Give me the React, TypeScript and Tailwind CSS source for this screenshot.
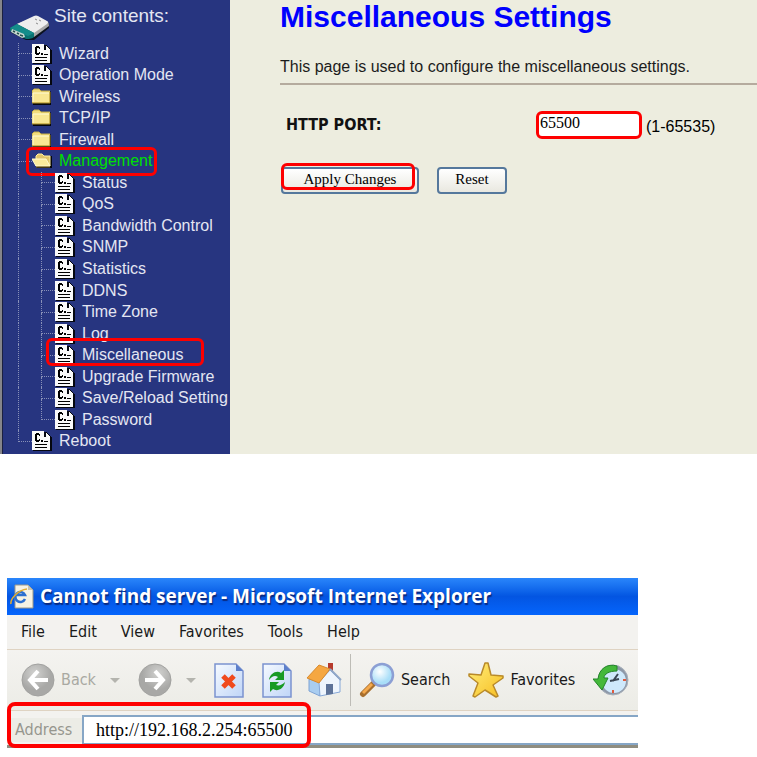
import clsx from "clsx";

interface TreeItem {
  label: string;
  icon: "page" | "folder" | "open";
  depth: 1 | 2;
  last?: boolean;
  active?: boolean;
  marked?: boolean;
}

const items: TreeItem[] = [
  { label: "Wizard", icon: "page", depth: 1 },
  { label: "Operation Mode", icon: "page", depth: 1 },
  { label: "Wireless", icon: "folder", depth: 1 },
  { label: "TCP/IP", icon: "folder", depth: 1 },
  { label: "Firewall", icon: "folder", depth: 1 },
  { label: "Management", icon: "open", depth: 1, active: true },
  { label: "Status", icon: "page", depth: 2 },
  { label: "QoS", icon: "page", depth: 2 },
  { label: "Bandwidth Control", icon: "page", depth: 2 },
  { label: "SNMP", icon: "page", depth: 2 },
  { label: "Statistics", icon: "page", depth: 2 },
  { label: "DDNS", icon: "page", depth: 2 },
  { label: "Time Zone", icon: "page", depth: 2 },
  { label: "Log", icon: "page", depth: 2 },
  { label: "Miscellaneous", icon: "page", depth: 2, marked: true },
  { label: "Upgrade Firmware", icon: "page", depth: 2 },
  { label: "Save/Reload Setting", icon: "page", depth: 2 },
  { label: "Password", icon: "page", depth: 2, last: true },
  { label: "Reboot", icon: "page", depth: 1, last: true },
];

const menus = ["File", "Edit", "View", "Favorites", "Tools", "Help"];

function PageIcon() {
  return (
    <svg width="20" height="20" viewBox="0 0 20 20" shapeRendering="crispEdges" className="shrink-0">
      <path d="M1 1h13l6 6v13H1z" fill="#05070f" />
      <path d="M0 0h12v6h6v13H0z" fill="#fafafa" />
      <path d="M14 2h1v1h1v1h1v1h1v1h-4z" fill="#fafafa" />
      <path d="M4 2h3v2H5v5h2v2H4v-1H3V3h1zM7 3h1v2H7zM7 8h1v2H7z" fill="#000" />
      <path d="M9 9h2v2H9zM12 10h4v1h-4z" fill="#000" />
      <path d="M3 13h12v1H3zM3 16h12v1H3z" fill="#000" />
    </svg>
  );
}

function FolderIcon() {
  return (
    <svg width="20" height="20" viewBox="0 0 20 20" className="shrink-0">
      <path d="M1 18h18V5l-1-1v12H1z" fill="#05070f" />
      <path d="M0 16V4l2-2h5l2 2h9v12z" fill="#f3dd7c" />
      <path d="M1 15V6h16v9z" fill="#f9e793" />
      <path d="M0 16V4l2-2h5l2 2h9" fill="none" stroke="#c8b048" />
      <path d="M1 6h16M1 6v9" fill="none" stroke="#fffbd8" />
      <path d="M0 16h18V5" fill="none" stroke="#a88c28" />
    </svg>
  );
}

function OpenFolderIcon() {
  return (
    <svg width="20" height="20" viewBox="0 0 20 20" className="shrink-0">
      <path d="M4 17h16V5h-2z" fill="#05070f" />
      <path d="M4 15V5l2-2h4l2 2h6v10z" fill="#e0c468" stroke="#fff0a0" />
      <path d="M0 8h14l4 7H4z" fill="#fbeb9c" stroke="#fffad0" />
      <path d="M4 16h14" stroke="#80641c" />
    </svg>
  );
}

function RouterIcon() {
  return (
    <svg width="41" height="26" viewBox="0 0 41 26" className="shrink-0">
      <path d="M1 17l16 8h8l15-12V8L26 20z" fill="#0b1220" />
      <path d="M27 1l12 6q1 1 1 4L25 22 8 9z" fill="#a6a6a6" />
      <path d="M25 1q2-1 4 0l9 5q2 1 0 3L25 18 8 9z" fill="#eeeeee" />
      <path d="M8 9l17 9v4q-2 2-8 2L1 16v-3z" fill="#0a7272" />
      <path d="M8 9l17 9-6 3L1 13z" fill="#148c8a" />
      <path d="M3 14l12 5 1 3-3 1-11-6z" fill="#c4d6d0" />
      <path d="M4 16l2 1M8 18l2 1M11 20l3 1" stroke="#24514e" strokeWidth="1.5" />
      <path d="M26 4l2 1M30 5l2 1M27 8l2 1" stroke="#8b8b8b" />
    </svg>
  );
}

function Branch({ last }: { last?: boolean }) {
  return (
    <span className="flex h-full w-[14px] shrink-0 flex-col">
      <span className="flex-1 border-b border-l border-dotted border-[#8890b8]" />
      <span className={clsx("flex-1", !last && "border-l border-dotted border-[#8890b8]")} />
    </span>
  );
}

function TreeRow({ item }: { item: TreeItem }) {
  return (
    <li className="relative flex items-center pl-[15px]">
      {item.depth === 2 && (
        <span className="h-full w-[23px] shrink-0 border-l border-dotted border-[#8890b8]" />
      )}
      <Branch last={item.last} />
      {item.icon === "page" && <PageIcon />}
      {item.icon === "folder" && <FolderIcon />}
      {item.icon === "open" && <OpenFolderIcon />}
      <a
        href="#"
        className={clsx(
          "ml-[7px] text-base leading-5 whitespace-nowrap",
          item.active ? "text-[#00e000]" : "text-[#e4e6f2]"
        )}
      >
        {item.label}
      </a>
      {item.active && (
        <span className="absolute -top-1 -bottom-1 left-[23px] w-[131px] rounded-md border-3 border-[#fe0000]" />
      )}
      {item.marked && (
        <span className="absolute -top-1.5 bottom-0 left-[43px] w-[158px] rounded-md border-3 border-[#fe0000]" />
      )}
    </li>
  );
}

function Sidebar() {
  return (
    <nav className="flex w-[230px] shrink-0 border-l-2 border-[#85858a]">
      <div className="flex min-w-0 flex-1 flex-col overflow-hidden border-l border-[#1b2040] bg-[#273580] pb-0.5">
        <div className="flex h-[43px] items-start pl-1.5">
          <span className="pt-[15px]">
            <RouterIcon />
          </span>
          <h2 className="ml-1 pt-1 text-[19px] leading-6 text-[#e4e6f2]">Site contents:</h2>
        </div>
        <ul className="grid flex-1 auto-rows-fr">
          {items.map((item) => (
            <TreeRow key={item.label} item={item} />
          ))}
        </ul>
      </div>
    </nav>
  );
}

function Settings() {
  return (
    <main className="min-w-0 flex-1 pl-[50px]">
      <h1 className="pt-px text-3xl leading-8 font-bold text-[#0000fe]">Miscellaneous Settings</h1>
      <p className="mt-6 text-base leading-5 text-[#1c1c1c]">
        This page is used to configure the miscellaneous settings.
      </p>
      <hr className="mt-1.5 border-t-2 border-[#b5ab9e]" />
      <form onSubmit={(e) => e.preventDefault()}>
        <div className="mt-[26px] flex items-center pl-1.5">
          <label
            htmlFor="port"
            className="w-[250px] font-['DejaVu_Sans_Condensed','DejaVu_Sans',sans-serif] text-base font-bold text-[#111]"
          >
            HTTP PORT:
          </label>
          <input
            id="port"
            defaultValue="65500"
            className="h-7 w-[106px] rounded-md border-3 border-[#fe0000] bg-white px-px pb-1 font-['Liberation_Serif',serif] text-base text-black"
          />
          <span className="ml-1 pt-1 text-base">(1-65535)</span>
        </div>
        <div className="mt-7 flex gap-[18px] pl-px font-['Liberation_Serif',serif] text-[15px] leading-5 text-black">
          <button
            type="submit"
            className="relative h-[27px] w-[138px] rounded border-2 border-[#55789c] bg-linear-to-b from-white to-[#e9e8e0] pb-1 leading-5"
          >
            Apply Changes
            <span className="absolute -top-1.5 right-0.5 bottom-0.5 -left-0.5 rounded-md border-3 border-[#fe0000]" />
          </button>
          <button
            type="reset"
            className="h-[27px] w-[70px] rounded border-2 border-[#55789c] bg-linear-to-b from-white to-[#e9e8e0] pb-1 leading-5"
          >
            Reset
          </button>
        </div>
      </form>
    </main>
  );
}

function ArrowDisc({ flip }: { flip?: boolean }) {
  return (
    <svg width="34" height="34" viewBox="0 0 34 34" className={clsx("shrink-0", flip && "-scale-x-100")}>
      <defs>
        <radialGradient id="disc" cx="40%" cy="30%">
          <stop offset="0" stopColor="#d2d2d0" />
          <stop offset="1" stopColor="#a8a8a6" />
        </radialGradient>
      </defs>
      <circle cx="17" cy="17" r="16" fill="url(#disc)" stroke="#a2a2a0" />
      <path d="M17 8l-8 9 8 9M10 17h17" fill="none" stroke="#fff" strokeWidth="4" />
    </svg>
  );
}

function Caret() {
  return (
    <svg width="10" height="5" viewBox="0 0 10 5" className="shrink-0">
      <path d="M0 0h10L5 5z" fill="#b4b4ae" />
    </svg>
  );
}

function Sheet({ children }: { children: React.ReactNode }) {
  return (
    <svg width="30" height="35" viewBox="0 0 30 35" className="shrink-0">
      <defs>
        <linearGradient id="sheet" x1="0" y1="0" x2="1" y2="1">
          <stop offset="0" stopColor="#f6faff" />
          <stop offset="1" stopColor="#bfd5f7" />
        </linearGradient>
      </defs>
      <path d="M1 1h21l7 7v26H1z" fill="url(#sheet)" stroke="#7b93cf" strokeWidth="1.5" />
      <path d="M22 1v7h7z" fill="#5c7fcb" />
      {children}
    </svg>
  );
}

function HomeIcon() {
  return (
    <svg width="36" height="36" viewBox="0 0 36 36" className="shrink-0">
      <path d="M22 1h5v12h-5z" fill="#b63a2c" />
      <path d="M3 17l11 3v14L3 29z" fill="#a9cdf0" stroke="#7fa3d3" />
      <path d="M13 20L24 8l10 10v12l-20 4z" fill="#eef5fd" stroke="#86a8d8" />
      <path d="M1 16L13 3l11 4-11 14z" fill="#f5a742" stroke="#d98a2c" />
      <path d="M24 7l11 11" stroke="#90a7c8" strokeWidth="2" />
      <path d="M20 22h7v10l-7 1z" fill="#5d7298" />
    </svg>
  );
}

function SearchIcon() {
  return (
    <svg width="36" height="36" viewBox="0 0 36 36" className="shrink-0">
      <defs>
        <radialGradient id="lens" cx="40%" cy="35%">
          <stop offset="0" stopColor="#ffffff" />
          <stop offset="1" stopColor="#a9def8" />
        </radialGradient>
      </defs>
      <path d="M14 22L4 32" stroke="#a8702f" strokeWidth="6" strokeLinecap="round" />
      <path d="M13 22L4 31" stroke="#f5a94c" strokeWidth="3" />
      <circle cx="23" cy="13" r="11" fill="url(#lens)" stroke="#8c9fd4" strokeWidth="2.5" />
    </svg>
  );
}

function StarIcon() {
  return (
    <svg width="36" height="36" viewBox="0 0 36 36" className="shrink-0">
      <defs>
        <linearGradient id="star" x1="0" y1="0" x2="1" y2="1">
          <stop offset="0" stopColor="#ffee7a" />
          <stop offset="1" stopColor="#f7be22" />
        </linearGradient>
      </defs>
      <path
        d="M17 1h3l3 12 12 1v2l-10 7 5 11-2 1-11-7-10 7-2-1 5-13L1 14v-2l12 1z"
        fill="url(#star)"
        stroke="#b98a2a"
        strokeWidth="1.5"
        strokeLinejoin="round"
      />
    </svg>
  );
}

function HistoryIcon() {
  return (
    <svg width="36" height="36" viewBox="0 0 36 36" className="shrink-0">
      <circle cx="20" cy="18" r="15" fill="#8d98a8" stroke="#aab2bb" />
      <circle cx="21" cy="19" r="12" fill="#cfe9fb" />
      <path d="M20 19l5-7M17 19l9-2" stroke="#3a4652" strokeWidth="2" />
      <path d="M20 28v3M30 18h3" stroke="#e05a3c" strokeWidth="2" />
      <path d="M24 4C14 1 6 7 5 17H0l9 11 6-12h-4c0-4 5-7 13-7z" fill="#44b83a" stroke="#23852a" />
    </svg>
  );
}

function BrowserIcon() {
  return (
    <svg width="24" height="25" viewBox="0 0 24 25" className="shrink-0">
      <path d="M5 1h13l5 5v18H5z" fill="#f6f2e4" stroke="#9c9888" />
      <path d="M18 1v5h5z" fill="#c9c3ae" />
      <path d="M15 15a5 5 0 1 1 0-4H7" fill="none" stroke="#2c6fd0" strokeWidth="2.5" />
      <path d="M1 20C0 15 8 6 17 5" fill="none" stroke="#e3ac30" strokeWidth="1.5" />
    </svg>
  );
}

function Browser() {
  return (
    <section className="relative mr-[119px] ml-[7px] overflow-hidden bg-[#f3f2ef] font-['DejaVu_Sans_Condensed','DejaVu_Sans',sans-serif] text-base text-[#1a1a1a]">
      <header className="flex h-[37px] items-center gap-1.5 bg-linear-to-b from-[#2a86fb] via-[#0355e2] to-[#0565fc] pl-[3px]">
        <BrowserIcon />
        <h2 className="font-['Open_Sans',sans-serif] text-[19px] font-bold whitespace-nowrap text-white [text-shadow:1px_2px_1px_#0a2a80]">
          Cannot find server - Microsoft Internet Explorer
        </h2>
      </header>
      <ul className="flex h-[35px] items-center gap-6 border-b border-[#dfd3c2] pl-3.5">
        {menus.map((menu) => (
          <li key={menu}>
            <button type="button">{menu}</button>
          </li>
        ))}
      </ul>
      <div className="flex h-[61px] items-center border-b border-[#dfd3c2] bg-linear-to-b from-[#f4f3f0] to-[#ecece6] pl-3.5 text-nowrap">
        <button type="button" className="flex items-center gap-1.5 text-[#a9a9a2]">
          <ArrowDisc />
          Back
        </button>
        <span className="ml-3.5">
          <Caret />
        </span>
        <button type="button" aria-label="Forward" className="ml-[18px]">
          <ArrowDisc flip />
        </button>
        <span className="ml-3.5">
          <Caret />
        </span>
        <button type="button" aria-label="Stop" className="ml-[18px]">
          <Sheet>
            <path d="M9 13l11 11M20 13L9 24" stroke="#f04a1e" strokeWidth="5" />
          </Sheet>
        </button>
        <button type="button" aria-label="Refresh" className="ml-[18px]">
          <Sheet>
            <path d="M7 17c1-7 8-10 12-7l3-3v10h-9l3-3c-3-2-6-1-9 3z" fill="#189a25" />
            <path d="M23 19c-1 7-8 10-12 7l-3 3V19h9l-3 3c3 1 6 0 9-3z" fill="#189a25" />
          </Sheet>
        </button>
        <button type="button" aria-label="Home" className="ml-3.5">
          <HomeIcon />
        </button>
        <span className="ml-2 h-[52px] border-l border-[#bdbcb6]" />
        <button type="button" className="ml-2 flex items-center gap-1.5">
          <SearchIcon />
          Search
        </button>
        <button type="button" className="ml-[18px] flex items-center gap-1.5">
          <StarIcon />
          Favorites
        </button>
        <button type="button" aria-label="History" className="ml-[18px]">
          <HistoryIcon />
        </button>
      </div>
      <div className="flex h-[37px] items-stretch border-b-3 border-[#8f8d80] pt-1">
        <label htmlFor="address" className="w-[75px] self-center bg-[#ecece6] pl-2 text-[#96968e]">
          Address
        </label>
        <input
          id="address"
          defaultValue="http://192.168.2.254:65500"
          className="min-w-0 flex-1 border-y-2 border-l-2 border-[#86a6c6] bg-white pl-3 font-['Liberation_Serif',serif] text-lg text-black"
        />
      </div>
      <span className="absolute bottom-0 left-0 h-[46px] w-[304px] rounded-lg border-4 border-[#fe0000]" />
    </section>
  );
}

export default function App() {
  return (
    <div className="bg-white font-['Liberation_Sans',Arial,sans-serif]">
      <div className="flex min-h-[454px] bg-[#ededdf]">
        <Sidebar />
        <Settings />
      </div>
      <div className="pt-[124px] pb-2">
        <Browser />
      </div>
    </div>
  );
}
